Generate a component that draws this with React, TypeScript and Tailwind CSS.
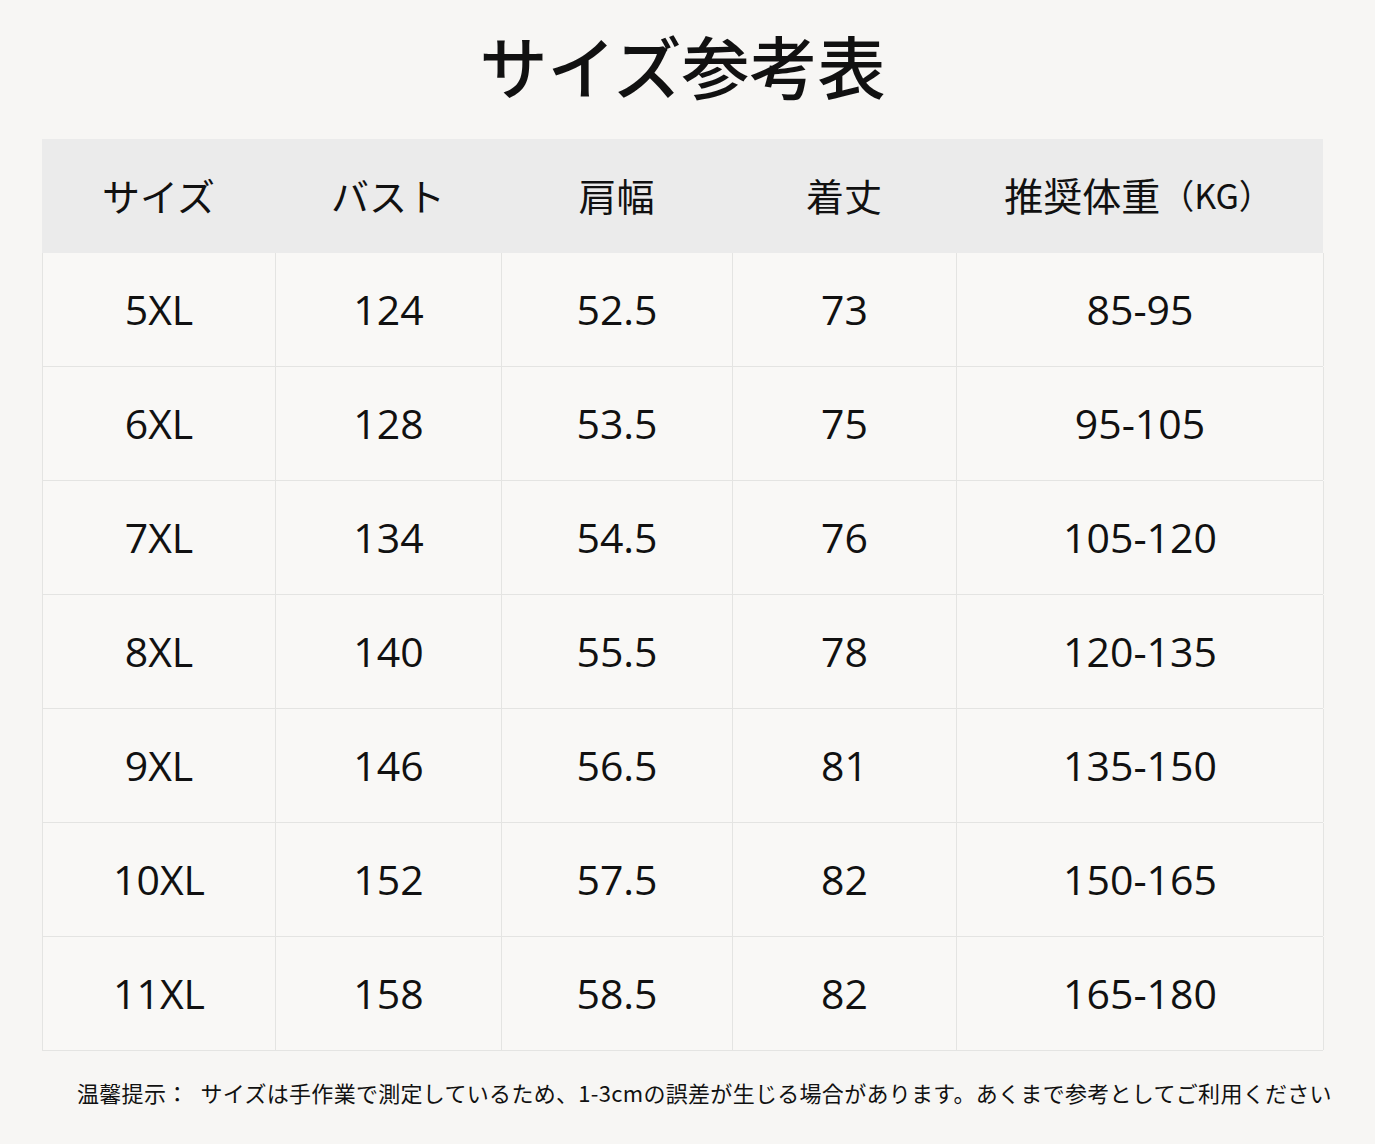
import React from "react";

const rows = [
  ["5XL", "124", "52.5", "73", "85-95"],
  ["6XL", "128", "53.5", "75", "95-105"],
  ["7XL", "134", "54.5", "76", "105-120"],
  ["8XL", "140", "55.5", "78", "120-135"],
  ["9XL", "146", "56.5", "81", "135-150"],
  ["10XL", "152", "57.5", "82", "150-165"],
  ["11XL", "158", "58.5", "82", "165-180"],
];

const font = { fontFamily: '"Open Sans", "Noto Sans CJK JP", sans-serif' };
const jp = { fontFamily: '"Noto Sans CJK JP", sans-serif' };

export default function App() {
  return (
    <div className="w-[1375px] h-[1144px] bg-[#f7f6f4] text-[#111]" style={font}>
      <div className="h-[139px] flex items-center justify-center pb-[10px]">
        <h1 className="text-[68px] font-medium leading-none pr-[10px]" style={jp}>
          サイズ参考表
        </h1>
      </div>
      <div className="ml-[42px] w-[1281px]">
        <div className="grid grid-cols-[233px_226px_231px_224px_367px] h-[114px] bg-[#ebebeb]">
          {["サイズ", "バスト", "肩幅", "着丈"].map((h) => (
            <div key={h} className="flex items-center justify-center text-[38px] font-normal pb-[4px]" style={jp}>
              {h}
            </div>
          ))}
          <div className="flex items-center justify-center pb-[4px] pr-[2px]" style={jp}>
            <span className="text-[39px] font-normal">推奨体重</span>
            <span className="text-[34px] font-normal">（KG）</span>
          </div>
        </div>
        <div className="border-l border-[#e4e4e2]">
          {rows.map((r, i) => (
            <div key={i} className="grid grid-cols-[233px_226px_231px_224px_367px] h-[114px] border-b border-[#e4e4e2]">
              {r.map((c, j) => (
                <div key={j} className="flex items-center justify-center border-r border-[#e4e4e2] text-[41px] leading-none bg-[#f9f8f6]">
                  {c}
                </div>
              ))}
            </div>
          ))}
        </div>
      </div>
      <div className="h-[84px] flex items-center pl-[77px] pb-[2px]">
        <div className="whitespace-nowrap text-[22px] tracking-[0.3px] leading-none" style={jp}>
          温馨提示：<span className="ml-[12px]">サイズは手作業で測定しているため、1-3cmの誤差が生じる場合があります。あくまで参考としてご利用ください</span>
        </div>
      </div>
    </div>
  );
}
